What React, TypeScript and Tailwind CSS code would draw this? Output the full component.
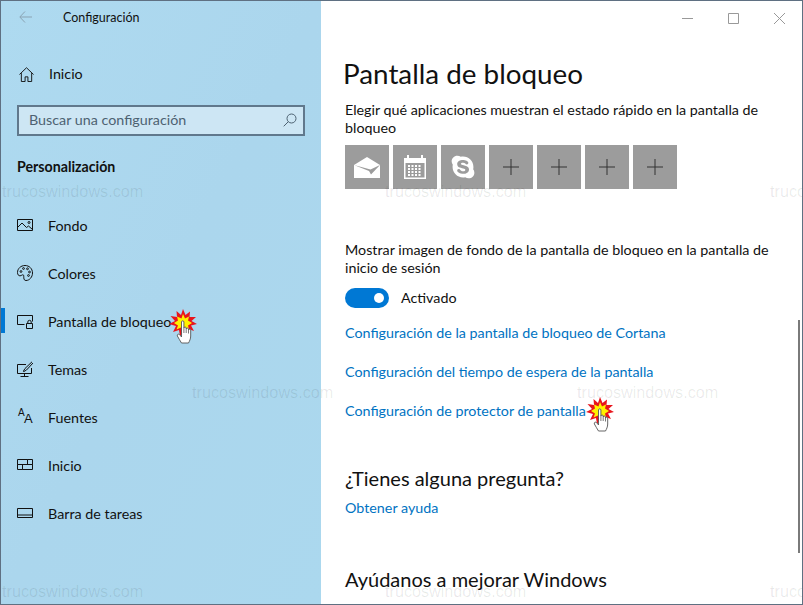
import { FaSkype } from 'react-icons/fa';

const iconProps = {
  viewBox: '0 0 16 16',
  fill: 'none',
  stroke: 'currentColor',
  strokeWidth: 1,
  className: 'w-4 h-4 shrink-0 -mt-[2px]',
};

function NavIcon({ name }: { name: string }) {
  if (name === 'image')
    return (
      <svg {...iconProps}>
        <path d="M.5 2.500h15v11H.5z" />
        <path d="M.5 10.500 5 6l4.500 4.500 2-1.500 4 3.500" />
        <circle cx="12" cy="5.500" r="1" />
      </svg>
    );
  if (name === 'palette')
    return (
      <svg {...iconProps}>
        <path d="M8 .5C3.800.5.5 3.600.5 7.500c0 2 1 3.300 2.400 3.300 1.600 0 2.200-1.200 3.200-1 .9.2.6 1.500.7 3 .1 1.800.8 2.700 2.200 2.700 3.500 0 6.500-3.500 6.500-7.500C15.500 3.600 12.200.5 8 .5z" />
        <circle cx="4" cy="6.500" r=".9" />
        <circle cx="6.500" cy="3.500" r=".9" />
        <circle cx="10.500" cy="3.800" r=".9" />
        <circle cx="12.500" cy="7" r=".9" />
        <circle cx="11.500" cy="10.500" r=".9" />
      </svg>
    );
  if (name === 'lock')
    return (
      <svg {...iconProps}>
        <path d="M7.500 11.500H.5v-9h15v6" />
        <path d="M9.500 10.500h6v5h-6z" />
        <path d="M10.800 10.500V9a1.700 1.700 0 0 1 3.400 0v1.500" />
      </svg>
    );
  if (name === 'theme')
    return (
      <svg {...iconProps}>
        <path d="M9 3.500H.5v9h14V7" />
        <path d="M7.500 12.500v2.500M3.500 15.500h8" />
        <path d="M15 .8 8 7.500 6.500 10c-.3.5 0 .8.500.5L9.500 9 16 2" />
      </svg>
    );
  if (name === 'font')
    return (
      <span className="w-4 h-4 shrink-0 relative leading-none -mt-[2px]" style={{ fontFamily: '"Liberation Sans", sans-serif' }}>
        <span className="absolute left-[1px] -top-[1px] text-[10px] font-normal">A</span>
        <span className="absolute left-[7px] top-[3px] text-[13px] font-normal">A</span>
      </span>
    );
  if (name === 'start')
    return (
      <svg {...iconProps}>
        <path d="M.5 2.500h10v5H.5zM10.500 2.500h5v5h-5zM.5 7.500h5v5H.5zM5.500 7.500h10v5h-10z" />
      </svg>
    );
  return (
    <svg {...iconProps}>
      <path d="M.5 3.500h15v9H.5zM.5 10h15" />
    </svg>
  );
}

const navItems = [
  { label: 'Fondo', icon: 'image' },
  { label: 'Colores', icon: 'palette' },
  { label: 'Pantalla de bloqueo', icon: 'lock', active: true },
  { label: 'Temas', icon: 'theme' },
  { label: 'Fuentes', icon: 'font' },
  { label: 'Inicio', icon: 'start' },
  { label: 'Barra de tareas', icon: 'taskbar' },
];

function Watermark({ className }: { className: string }) {
  return (
    <div
      className={`absolute text-[16.200px] leading-none whitespace-nowrap text-black/[.09] pointer-events-none ${className}`}
      style={{ fontFamily: '"Liberation Sans", sans-serif' }}
    >
      trucoswindows.com
    </div>
  );
}

// click marker: red burst with a pointing hand on top
function ClickMark({ className }: { className: string }) {
  return (
    <svg viewBox="0 0 28 36" className={`absolute w-[28px] h-[36px] ${className}`}>
      <polygon
        points="14,0 16.500,6 21,2.500 20.500,8 27,8 22.500,12 28,15 22,16.500 25,22 19.500,20 19,26 15,22 11,27 10,21 4,23 7,17 0,15 6,12 1.500,7 8,8 7.500,2 12,6"
        fill="#e8141c"
      />
      <polygon
        points="14,5 16,9.500 20,7.500 19,11.500 23,14 19,16.500 20,20.500 15.500,18.500 14,23 12,18.500 7.500,20.500 9,16.500 5,14 9,11.500 8,7.500 12.500,9.500"
        fill="#fff200"
      />
      <g transform="translate(2 0)">
        <path
          d="M10.500 13c0-1.600 2.400-1.600 2.400 0v6c0-1.300 2.300-1.300 2.300 0v1c0-1.200 2.300-1.200 2.300 0v1c0-1.100 2.200-1.100 2.200 0v6c0 3-1.200 5-2.200 7h-7c-1.200-2-2.800-4.500-4.100-7-.8-1.500 1.200-2.600 2.300-1.300l1.800 2.300z"
          fill="#fff"
          stroke="#555"
          strokeWidth=".9"
        />
        <path d="M12.900 19v5M15.200 20v4M17.500 21v3.500" stroke="#555" strokeWidth=".8" fill="none" />
      </g>
    </svg>
  );
}

function MailTile() {
  return (
    <svg viewBox="0 0 26 21" className="w-[26px] h-[21px]">
      <path d="M0 8 13 0l13 8v13H0z" fill="#fff" />
      <path d="M0 8l15 6 2 3.500L26 8l-9.500 4.500z" fill="#9c9c9c" />
    </svg>
  );
}

function CalendarTile() {
  return (
    <svg viewBox="0 0 22 24" className="w-[22px] h-[24px]">
      <path d="M0 3h3V0h2v3h12V0h2v3h3v21H0z" fill="#fff" />
      <path d="M1.500 8h19v14.500h-19z" fill="#9c9c9c" />
      {[10, 13, 16, 19].map((y) =>
        [4, 7.500, 11, 14.500].map((x) => <rect key={`${x}-${y}`} x={x} y={y} width="2" height="2" fill="#fff" />),
      )}
    </svg>
  );
}

function PlusIcon() {
  return (
    <svg viewBox="0 0 16 16" className="w-4 h-4 text-[#333]" stroke="currentColor" strokeWidth="1">
      <path d="M0 8h16M8 0v16" />
    </svg>
  );
}

export default function App() {
  return (
    <div
      className="relative w-[803px] h-[605px] flex overflow-hidden bg-white border border-[#5f7082] text-[14.300px] text-[#111]"
      style={{ fontFamily: 'Lato, sans-serif' }}
    >
      <aside className="w-[320px] shrink-0 bg-gradient-to-br from-[#aedaf0] via-[#abd6ed] to-[#abd8ee] flex flex-col">
        <div className="h-[34px] flex items-center pl-[18px]">
          <svg viewBox="0 0 13 12" className="w-[13px] h-[12px] text-[#8aa3b3] -mt-[2px]" fill="none" stroke="currentColor">
            <path d="M6 .5.8 6 6 11.500M1 6h12" />
          </svg>
          <span className="ml-[31px] text-[12.500px]">Configuración</span>
        </div>
        <div className="mt-[23px] h-[32px] flex items-center pl-[18px]">
          <svg viewBox="0 0 16 16" className="w-[15px] h-[15px]" fill="none" stroke="currentColor">
            <path d="M.5 8 8 .8 15.500 8M2.500 6.500v9h4v-5h3v5h4v-9" />
          </svg>
          <span className="ml-[15px]">Inicio</span>
        </div>
        <div className="mx-[16px] mt-[15px] h-[31px] border-2 border-[#60788c] bg-[#cde6f4] flex items-center justify-between pl-[10px] pr-[6px] pb-[2px] text-[#4d6272]">
          <span>Buscar una configuración</span>
          <svg viewBox="0 0 14 14" className="w-[14px] h-[14px]" fill="none" stroke="currentColor">
            <circle cx="8.500" cy="5.500" r="4.500" />
            <path d="M5.300 8.700.7 13.300" />
          </svg>
        </div>
        <div className="mt-[21px] ml-[16px] font-bold leading-[20px] text-[14.200px]">Personalización</div>
        <nav className="mt-[25px] flex flex-col">
          {navItems.map((n) => (
            <div key={n.label} className="relative h-[48px] flex items-center pl-[16px]">
              {n.active && <div className="absolute left-0 top-[10px] w-[4px] h-[25px] bg-[#0078d4]" />}
              <NavIcon name={n.icon} />
              <span className="ml-[15px]">{n.label}</span>
            </div>
          ))}
        </nav>
      </aside>

      <main className="flex-1 relative pl-[24px]">
        <div className="h-[34px] absolute top-0 right-0 flex items-center text-[#999]">
          <div className="w-[46px] flex justify-center">
            <svg viewBox="0 0 11 11" className="w-[11px] h-[11px]" stroke="currentColor"><path d="M0 5.500h11" /></svg>
          </div>
          <div className="w-[46px] flex justify-center">
            <svg viewBox="0 0 11 11" className="w-[11px] h-[11px]" fill="none" stroke="currentColor"><path d="M.5.500h10v10H.5z" /></svg>
          </div>
          <div className="w-[46px] flex justify-center">
            <svg viewBox="0 0 11 11" className="w-[11px] h-[11px]" stroke="currentColor"><path d="m0 0 11 11M11 0 0 11" /></svg>
          </div>
        </div>

        <h1 className="mt-[55px] -ml-[2px] text-[27.800px] leading-[36px]">Pantalla de bloqueo</h1>
        <p className="mt-[9px] w-[430px] leading-[18px]">Elegir qué aplicaciones muestran el estado rápido en la pantalla de bloqueo</p>
        <div className="mt-[8px] flex gap-[4px]">
          <div className="w-[44px] h-[44px] bg-[#9c9c9c] flex items-center justify-center"><MailTile /></div>
          <div className="w-[44px] h-[44px] bg-[#9c9c9c] flex items-center justify-center"><CalendarTile /></div>
          <div className="w-[44px] h-[44px] bg-[#9c9c9c] flex items-center justify-center"><FaSkype className="w-[26px] h-[26px] text-white" /></div>
          {[0, 1, 2, 3].map((i) => (
            <div key={i} className="w-[44px] h-[44px] bg-[#9c9c9c] flex items-center justify-center"><PlusIcon /></div>
          ))}
        </div>
        <p className="mt-[52px] w-[430px] leading-[18px]">Mostrar imagen de fondo de la pantalla de bloqueo en la pantalla de inicio de sesión</p>
        <div className="mt-[10px] flex items-center">
          <div className="w-[44px] h-[20px] rounded-full bg-[#0078d4] flex items-center justify-end pr-[5px]">
            <div className="w-[10px] h-[10px] rounded-full bg-white" />
          </div>
          <span className="ml-[12px]">Activado</span>
        </div>
        <div className="mt-[15px] flex flex-col gap-[19px] text-[#0073c2] leading-[20px]">
          <span>Configuración de la pantalla de bloqueo de Cortana</span>
          <span>Configuración del tiempo de espera de la pantalla</span>
          <span>Configuración de protector de pantalla</span>
        </div>
        <h2 className="mt-[44px] text-[20px] leading-[26px]">¿Tienes alguna pregunta?</h2>
        <div className="mt-[7px] text-[#0073c2] leading-[20px]">Obtener ayuda</div>
        <h2 className="mt-[48px] text-[20px] leading-[26px]">Ayúdanos a mejorar Windows</h2>
        <div className="absolute right-[2px] top-[319px] w-[2px] h-[233px] bg-[#7a7a7a]" />
      </main>

      <Watermark className="left-[1px] top-[182px]" />
      <Watermark className="left-[384px] top-[182px]" />
      <Watermark className="left-[769px] top-[182px]" />
      <Watermark className="left-[191px] top-[383px]" />
      <Watermark className="left-[576px] top-[383px]" />
      <Watermark className="left-[1px] top-[582px]" />
      <Watermark className="left-[384px] top-[582px]" />
      <Watermark className="left-[769px] top-[582px]" />

      <ClickMark className="left-[168px] top-[308px]" />
      <ClickMark className="left-[585px] top-[396px]" />
    </div>
  );
}
